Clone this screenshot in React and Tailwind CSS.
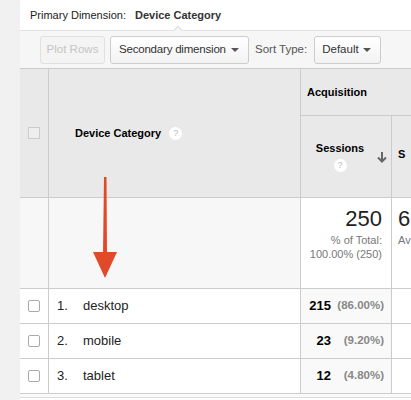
import { useState } from 'react'

const rows = [
  { n: '1.', name: 'desktop', sessions: '215', pct: '(86.00%)' },
  { n: '2.', name: 'mobile', sessions: '23', pct: '(9.20%)' },
  { n: '3.', name: 'tablet', sessions: '12', pct: '(4.80%)' },
]

const Caret = () => (
  <span className="ml-auto w-0 h-0 border-l-[4px] border-r-[4px] border-t-[4px] border-l-transparent border-r-transparent border-t-[#555]" />
)

const Help = () => (
  <span className="inline-flex items-center justify-center w-[13px] h-[13px] rounded-full bg-white text-[9px] text-[#bbb] leading-none">?</span>
)

const Checkbox = () => (
  <span className="block w-[12px] h-[12px] rounded-[2px] border border-[#aaa] bg-white" />
)

const App = () => {
  const [checked] = useState(false)

  return (
    <div className="relative w-[411px] h-[400px] overflow-hidden flex bg-white font-['Liberation_Sans',Arial,sans-serif] text-[#222]">
      <div className="w-[20px] shrink-0 bg-[#f1f1f1]" />
      <div className="flex-1 flex flex-col">
        {/* primary dimension */}
        <div className="relative h-[30px] flex items-center pl-[10px] text-[11px] bg-white whitespace-nowrap">
          <span className="text-[#222]">Primary Dimension:</span>
          <span className="ml-[9px] font-bold text-[#333]">Device Category</span>
          <span className="absolute z-10 left-[155px] bottom-[-3px] w-[6px] h-[6px] rotate-45 bg-[#f6f6f6] border-l border-t border-[#ddd]" />
        </div>

        {/* toolbar */}
        <div className="h-[38px] bg-[#f6f6f6] border-t border-[#e3e3e3] flex items-center pl-[20px] gap-[5px] text-[11px] whitespace-nowrap">
          <button className="h-[28px] w-[65px] rounded-[3px] border border-[#e0e0e0] bg-[#f4f4f4] text-[#c4c4c4] text-[11.5px]">Plot Rows</button>
          <button className="h-[28px] w-[139px] pl-[8px] pr-[9px] rounded-[3px] border border-[#ccc] bg-gradient-to-b from-white to-[#f2f2f2] text-[#333] text-[11.5px] flex items-center">
            <span className="tracking-[-0.2px]">Secondary dimension</span>
            <Caret />
          </button>
          <span className="text-[#555] text-[11.5px] ml-[1px] mr-[2px]">Sort Type:</span>
          <button className="h-[28px] w-[67px] pl-[7px] pr-[9px] rounded-[3px] border border-[#ccc] bg-gradient-to-b from-white to-[#f2f2f2] text-[#333] text-[11.5px] flex items-center">
            Default
            <Caret />
          </button>
        </div>

        {/* table */}
        <div className="grid grid-cols-[29px_252px_91px_1fr] border-t border-[#ccc] text-[11px]">
          {/* header */}
          <div className="row-span-2 h-[129px] bg-[#e9e9e9] border-r border-b border-[#ccc] flex items-center justify-center">
            <span className="block w-[12px] h-[12px] border border-[#ccc] bg-[#eee]" />
          </div>
          <div className="row-span-2 bg-[#e9e9e9] border-r border-b border-[#ccc] flex items-center pl-[26px] gap-[8px]">
            <span className="font-bold text-black">Device Category</span>
            <Help />
          </div>
          <div className="col-span-2 h-[47px] bg-[#e9e9e9] border-b border-[#ccc] flex items-center pl-[6px] font-bold text-black">
            Acquisition
          </div>
          <div className="h-[82px] bg-[#e9e9e9] border-r border-b border-[#ccc] relative flex flex-col items-center pt-[24px] pr-[12px] gap-[2px]">
            <span className="font-bold text-black">Sessions</span>
            <Help />
            <svg className="absolute right-[4px] top-[35px]" width="10" height="12" viewBox="0 0 10 12">
              <path d="M5 1 V10 M1 6.5 L5 10.5 L9 6.5" stroke="#666" strokeWidth="2" fill="none" />
            </svg>
          </div>
          <div className="bg-[#e9e9e9] border-b border-[#ccc] pl-[6px] pt-[30px] font-bold text-black">S</div>

          {/* totals */}
          <div className="h-[91px] bg-[#f7f7f7] border-r border-b border-[#ccc]" />
          <div className="bg-[#f7f7f7] border-r border-b border-[#ccc]" />
          <div className="bg-white border-r border-b border-[#ccc] flex flex-col items-end pr-[9px] pt-[8px] text-right">
            <span className="text-[22px] leading-[26px] text-[#222]">250</span>
            <span className="text-[11px] leading-[14px] text-[#777] mt-[1px]">% of Total:</span>
            <span className="text-[11px] leading-[14px] text-[#777]">100.00% (250)</span>
          </div>
          <div className="bg-white border-b border-[#ccc] pl-[6px] pt-[8px] flex flex-col">
            <span className="text-[22px] leading-[26px] text-[#222]">6</span>
            <span className="text-[11px] leading-[14px] text-[#777] mt-[1px]">Av</span>
          </div>

          {/* rows */}
          {rows.map((r) => (
            <div key={r.n} className="contents">
              <div className="h-[35px] bg-white border-r border-b border-[#ccc] flex items-center justify-center">
                <Checkbox checked={checked} />
              </div>
              <div className="bg-white border-r border-b border-[#ccc] flex items-center text-[13px] text-[#222]">
                <span className="w-[34px] pl-[8px]">{r.n}</span>
                <span>{r.name}</span>
              </div>
              <div className="bg-[#f9f9f9] border-r border-b border-[#ccc] flex items-center justify-end pr-[7px]">
                <span className="text-[13px] font-bold text-black">{r.sessions}</span>
                <span className="w-[53px] text-right text-[11.5px] font-bold text-[#888]">{r.pct}</span>
              </div>
              <div className="bg-white border-b border-[#ccc]" />
            </div>
          ))}
          <div className="col-span-4 h-[4px] border-b border-[#ddd] bg-[#fafafa]" />
        </div>
      </div>

      {/* annotation arrow */}
      <svg className="absolute left-[90px] top-[174px]" width="30" height="108" viewBox="0 0 30 108">
        <path d="M14 3 L16.5 3 L17 80 L13 80 Z" fill="#e04a2a" />
        <path d="M3 78 L27 78 L15 104 Z" fill="#e04a2a" />
      </svg>
    </div>
  )
}

export default App
